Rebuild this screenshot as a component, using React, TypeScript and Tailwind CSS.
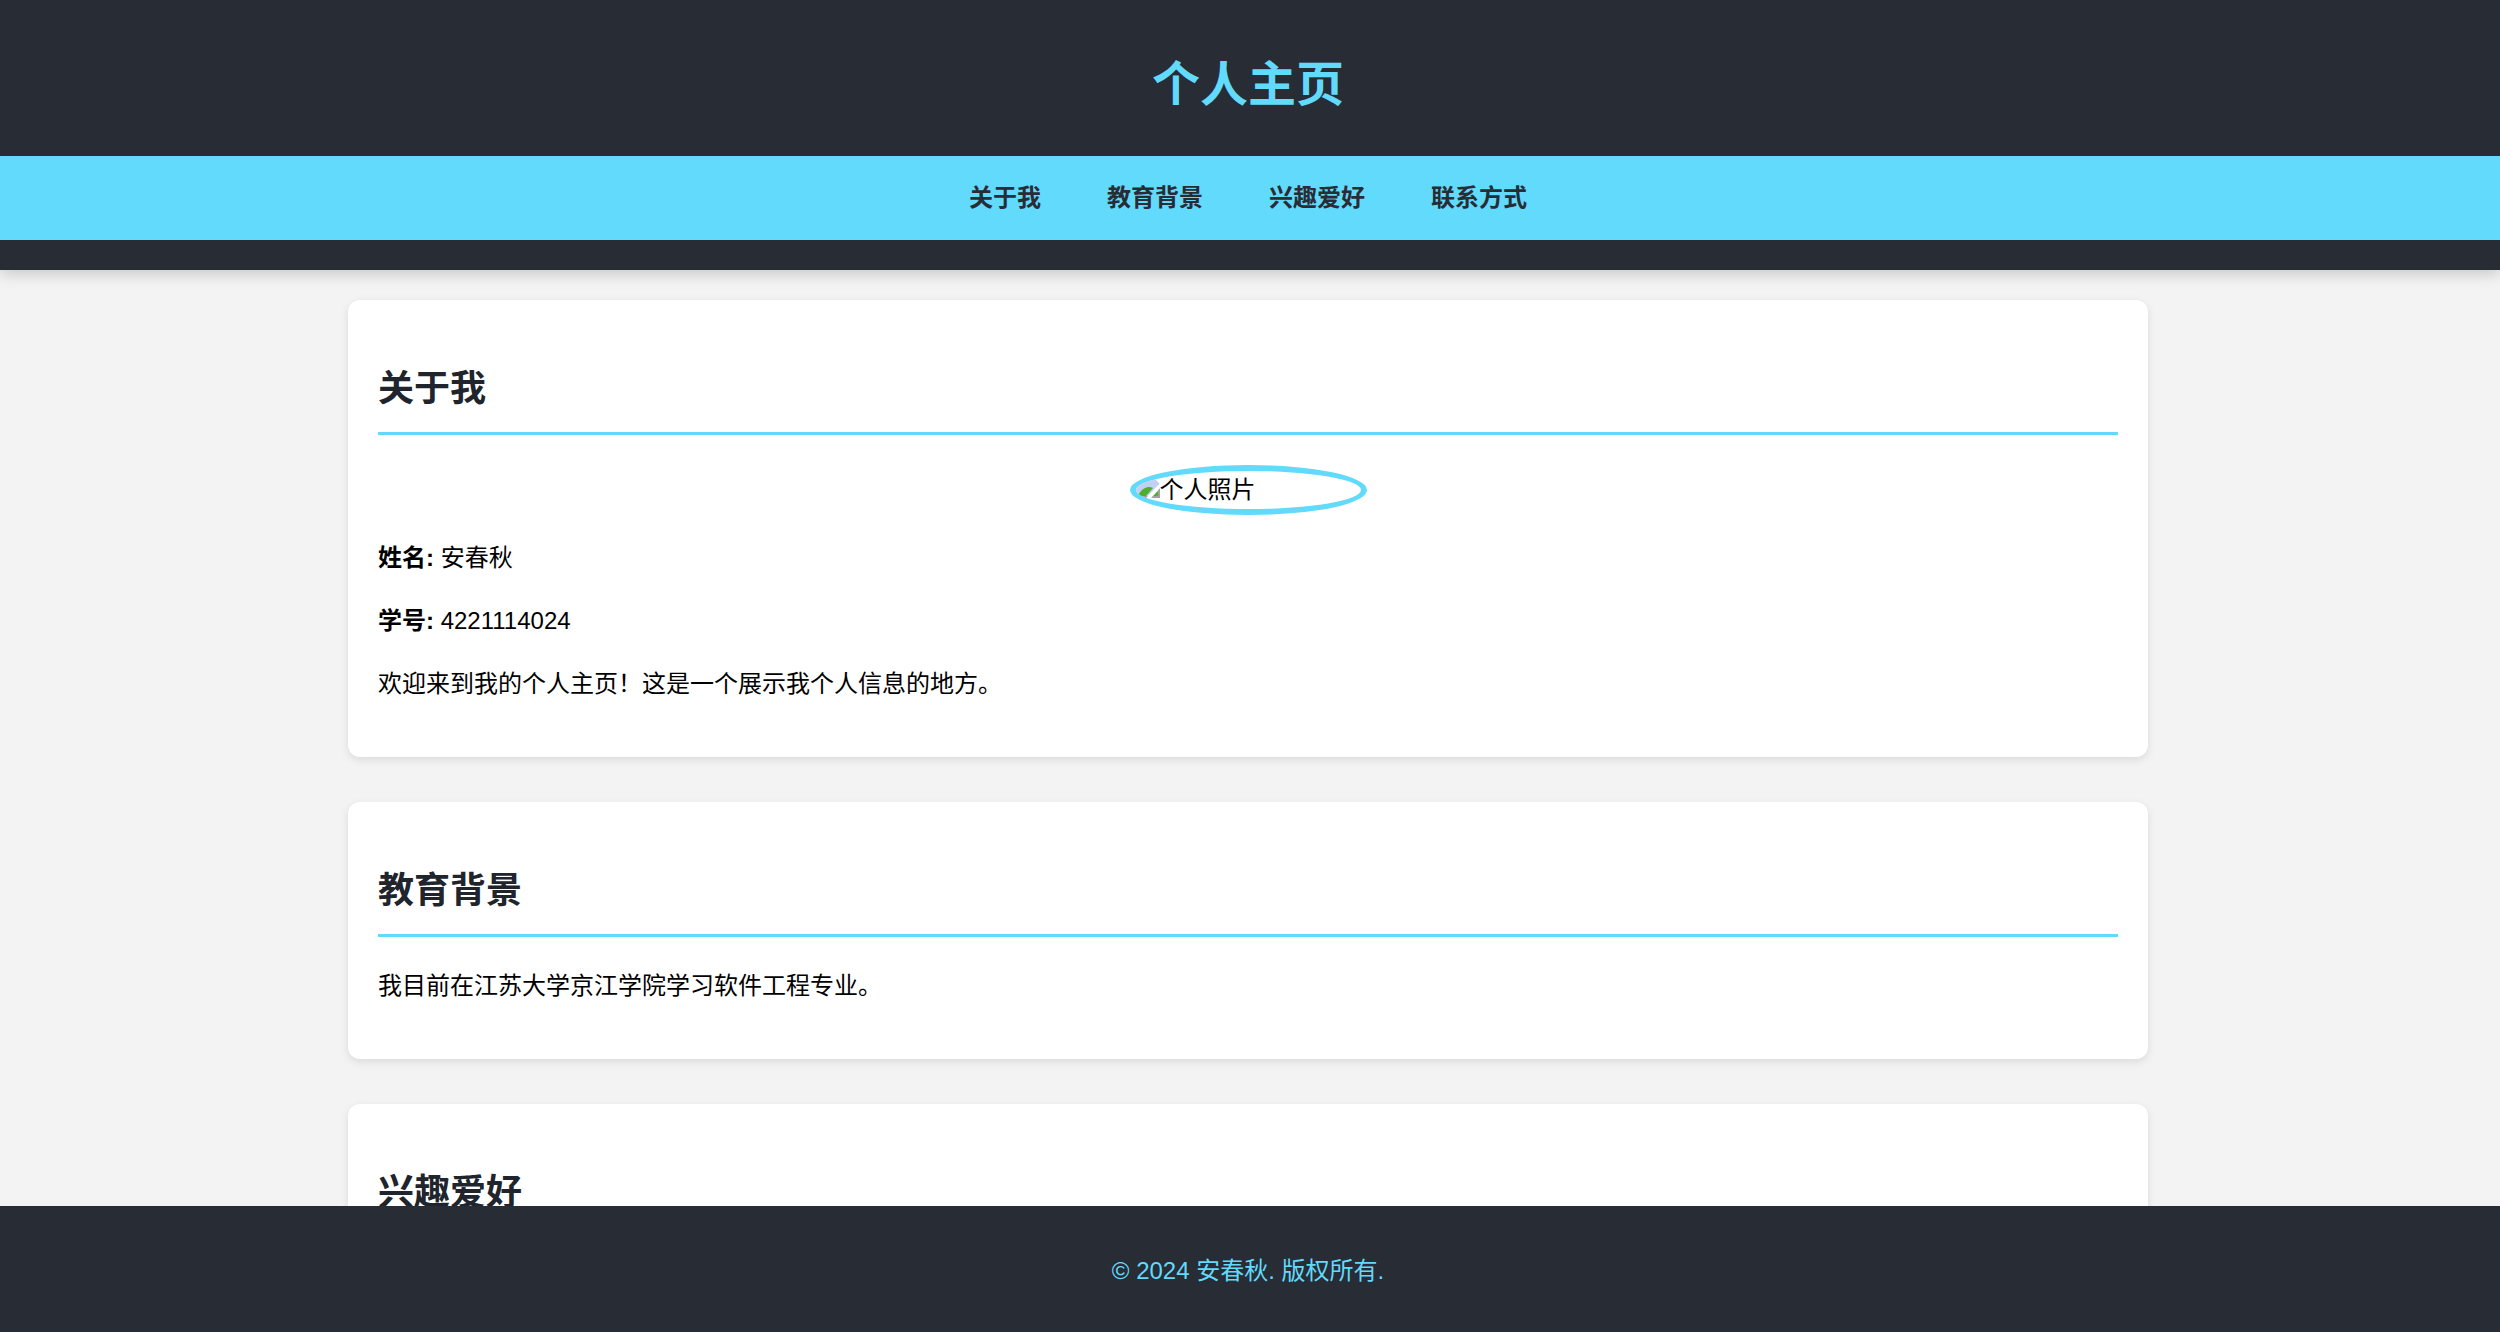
import type { ReactNode } from "react";

const links = [
  { href: "#about", label: "关于我" },
  { href: "#education", label: "教育背景" },
  { href: "#hobbies", label: "兴趣爱好" },
  { href: "#contact", label: "联系方式" },
];

function Section({ id, title, children }: { id: string; title: string; children?: ReactNode }) {
  return (
    <section
      id={id}
      aria-labelledby={id + "-title"}
      className="rounded-xl bg-white px-[30px] pt-[60px] pb-[54px] shadow-[0_3px_8px_rgba(0,0,0,0.1)]"
    >
      <h2
        id={id + "-title"}
        className="mb-[30px] border-b-3 border-[#61dafb] pb-[15px] text-[36px] leading-[57px] font-bold text-[#20242c]"
      >
        {title}
      </h2>
      {children}
    </section>
  );
}

/* Oval photo frame with the picture placeholder and its caption */
function Portrait() {
  return (
    <figure className="mx-auto mb-6 flex h-[50px] w-[237px] items-center overflow-hidden rounded-[50%] border-6 border-[#61dafb]">
      <svg aria-hidden="true" viewBox="0 0 24 24" className="size-6 shrink-0">
        <path d="M0 0H18L24 6V20H0Z" fill="#c1d0f4" />
        <path d="M23 6V19H1" fill="none" stroke="#a3a3a3" strokeWidth="2" />
        <path d="M2 18C5 11 11 7 17 10L10 18Z" fill="#4fae2c" />
        <path d="M17 18L22 13V18Z" fill="#4fae2c" />
        <path d="M10 20L24 5V10L15 20Z" fill="#fff" />
      </svg>
      <figcaption className="whitespace-nowrap">个人照片</figcaption>
    </figure>
  );
}

export default function App() {
  return (
    <div className="flex h-screen flex-col bg-[#f3f3f3] font-['Liberation_Sans','Noto_Sans_CJK_SC',sans-serif] text-2xl leading-[38px] text-black">
      <div className="min-h-0 flex-1 overflow-y-auto [scrollbar-width:none]">
        <header className="bg-[#282c34] pt-[46px] pb-[30px] shadow-[0_3px_15px_rgba(0,0,0,0.2)]">
          <h1 className="mb-8 pr-1 text-center text-[48px] leading-[78px] font-bold text-[#61dafb]">个人主页</h1>
          <nav className="flex justify-center gap-[66px] bg-[#61dafb] py-[23px] pr-1">
            {links.map((link) => (
              <a key={link.href} href={link.href} className="font-bold text-[#282c34]">
                {link.label}
              </a>
            ))}
          </nav>
        </header>
        <div className="py-[30px] pr-1">
          <main className="mx-auto flex w-full max-w-[1800px] flex-col gap-[45px]">
            <Section id="about" title="关于我">
              <Portrait />
              <div className="flex flex-col gap-[25px]">
                <p>
                  <strong>姓名:</strong> 安春秋
                </p>
                <p>
                  <strong>学号:</strong> 4221114024
                </p>
                <p>欢迎来到我的个人主页！这是一个展示我个人信息的地方。</p>
              </div>
            </Section>
            <Section id="education" title="教育背景">
              <p>我目前在江苏大学京江学院学习软件工程专业。</p>
            </Section>
            <Section id="hobbies" title="兴趣爱好" />
          </main>
        </div>
      </div>
      <footer className="bg-[#282c34] pt-[46px] pr-1 pb-[42px] text-center text-[#61dafb]">
        <p>© 2024 安春秋. 版权所有.</p>
      </footer>
    </div>
  );
}
